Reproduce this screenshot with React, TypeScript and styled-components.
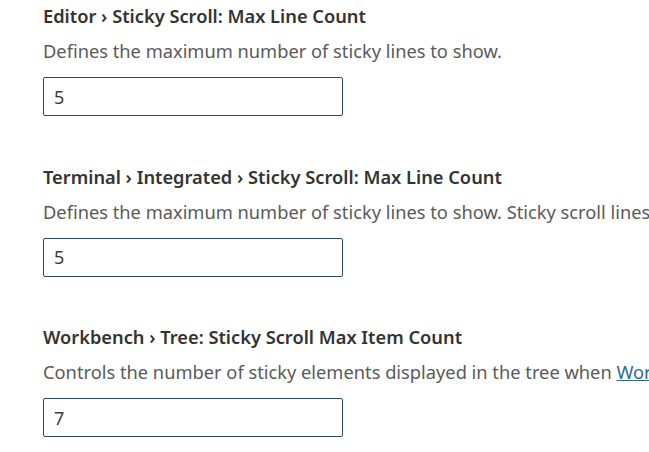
import React from "react";
import styled, { createGlobalStyle } from "styled-components";

const Global = createGlobalStyle`
  html, body { margin: 0; padding: 0; background: #ffffff; }
  body { font-family: "Noto Sans", "Open Sans", sans-serif; overflow: hidden; }
`;

const Page = styled.div`
  width: 649px;
  height: 452px;
  overflow: hidden;
  display: flex;
  flex-direction: column;
  padding-left: 43px;
  box-sizing: border-box;
`;

const Setting = styled.section`
  flex: 0 0 160.5px;
  display: flex;
  flex-direction: column;
  align-items: flex-start;
  padding-top: 4px;
  box-sizing: border-box;
`;

const Title = styled.div`
  font-size: 18.25px;
  font-weight: 600;
  line-height: 24px;
  color: #333333;
  white-space: nowrap;
`;

const Description = styled.div`
  margin-top: 11px;
  font-size: 18.28px;
  line-height: 24px;
  color: #5a5a5a;
  white-space: nowrap;
`;

const Link = styled.a`
  color: #2f6a99;
  text-decoration: underline;
`;

const NumberInput = styled.input`
  margin-top: 14px;
  width: 300px;
  height: 39px;
  box-sizing: border-box;
  border: 1px solid #2a4a63;
  border-radius: 2px;
  padding: 0 10px;
  font-family: inherit;
  font-size: 18px;
  color: #3b3b3b;
  outline: none;
  background: #fff;
`;

type Item = { path: string; desc: React.ReactNode; value: string };

const items: Item[] = [
  {
    path: "Editor › Sticky Scroll: Max Line Count",
    desc: "Defines the maximum number of sticky lines to show.",
    value: "5",
  },
  {
    path: "Terminal › Integrated › Sticky Scroll: Max Line Count",
    desc: "Defines the maximum number of sticky lines to show. Sticky scroll lines will never exceed 40% of the viewport regardless of this setting.",
    value: "5",
  },
  {
    path: "Workbench › Tree: Sticky Scroll Max Item Count",
    desc: (
      <>
        Controls the number of sticky elements displayed in the tree when <Link href="#">Workbench › Tree: Enable Sticky Scroll</Link> is enabled.
      </>
    ),
    value: "7",
  },
];

export default function App() {
  return (
    <Page>
      <Global />
      {items.map((it, i) => (
        <Setting key={i}>
          <Title>{it.path}</Title>
          <Description>{it.desc}</Description>
          <NumberInput type="text" defaultValue={it.value} readOnly />
        </Setting>
      ))}
    </Page>
  );
}
